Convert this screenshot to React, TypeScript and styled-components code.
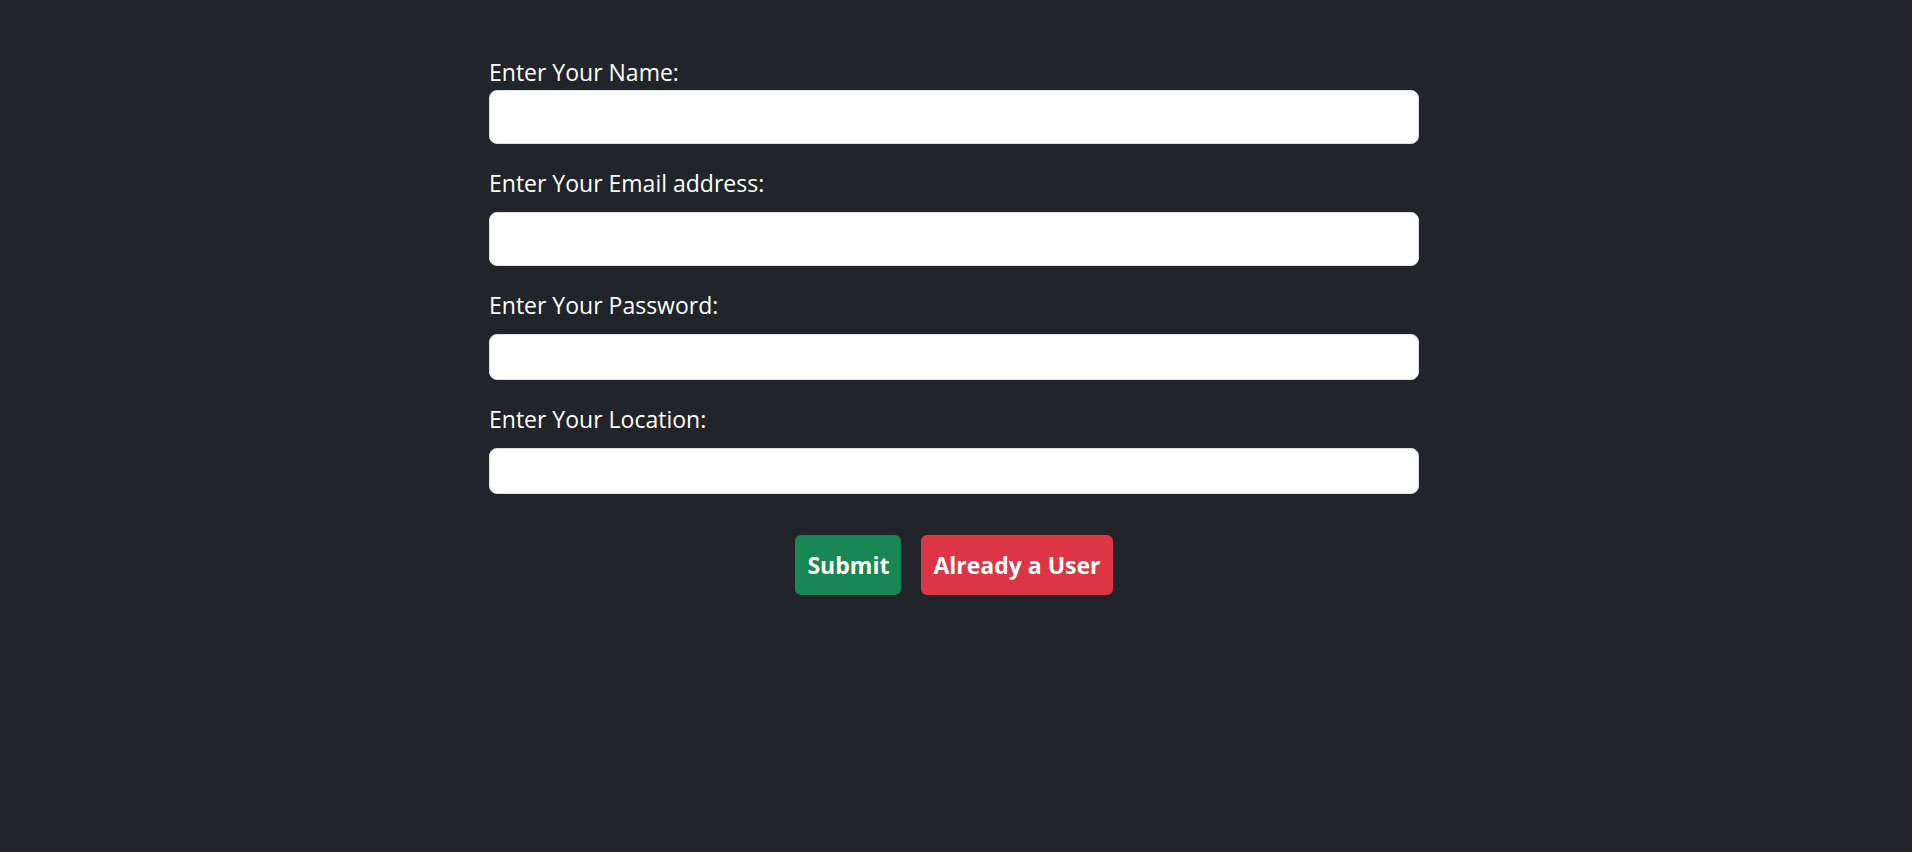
import React from "react";
import styled, { createGlobalStyle } from "styled-components";

const Global = createGlobalStyle`
  html, body {
    margin: 0;
    padding: 0;
    background: #212529;
  }
  body {
    font-family: "Open Sans", "Noto Sans", sans-serif;
    color: #ffffff;
  }
  * { box-sizing: border-box; }
`;

const Page = styled.div`
  min-height: 852px;
  background: #212529;
  display: flex;
  justify-content: center;
  padding: 54px 4px 0 0;
`;

const Form = styled.form`
  width: 930px;
  display: flex;
  flex-direction: column;
`;

const Group = styled.div<{ $first?: boolean }>`
  display: flex;
  flex-direction: column;
  margin-top: ${(p) => (p.$first ? "0" : "21px")};
`;

const Label = styled.label<{ $tight?: boolean }>`
  display: block;
  font-size: 23px;
  line-height: 36px;
  color: #ffffff;
  margin-bottom: ${(p) => (p.$tight ? "0" : "11px")};
`;

const Input = styled.input<{ $tall?: boolean }>`
  display: block;
  width: 100%;
  height: ${(p) => (p.$tall ? "54px" : "46px")};
  padding: 8px 16px;
  font-size: 20px;
  font-family: inherit;
  color: #212529;
  background: #ffffff;
  border: 1px solid #dee2e6;
  border-radius: 8px;
  outline: none;
`;

const Actions = styled.div`
  display: flex;
  justify-content: center;
  gap: 20px;
  margin-top: 41px;
`;

const Button = styled.button<{ $variant: "success" | "danger" }>`
  height: 60px;
  padding: 0 12px;
  border: none;
  border-radius: 6px;
  font-family: inherit;
  font-size: 23px;
  font-weight: 700;
  line-height: 36px;
  color: #ffffff;
  cursor: pointer;
  background: ${(p) => (p.$variant === "success" ? "#198754" : "#dc3545")};
`;

export default function App() {
  return (
    <>
      <Global />
      <Page>
        <Form onSubmit={(e) => e.preventDefault()}>
          <Group $first>
            <Label htmlFor="name" $tight>
              Enter Your Name:
            </Label>
            <Input id="name" type="text" $tall />
          </Group>
          <Group>
            <Label htmlFor="email">Enter Your Email address:</Label>
            <Input id="email" type="email" $tall />
          </Group>
          <Group>
            <Label htmlFor="password">Enter Your Password:</Label>
            <Input id="password" type="password" />
          </Group>
          <Group>
            <Label htmlFor="location">Enter Your Location:</Label>
            <Input id="location" type="text" />
          </Group>
          <Actions>
            <Button type="submit" $variant="success">
              Submit
            </Button>
            <Button type="button" $variant="danger">
              Already a User
            </Button>
          </Actions>
        </Form>
      </Page>
    </>
  );
}
